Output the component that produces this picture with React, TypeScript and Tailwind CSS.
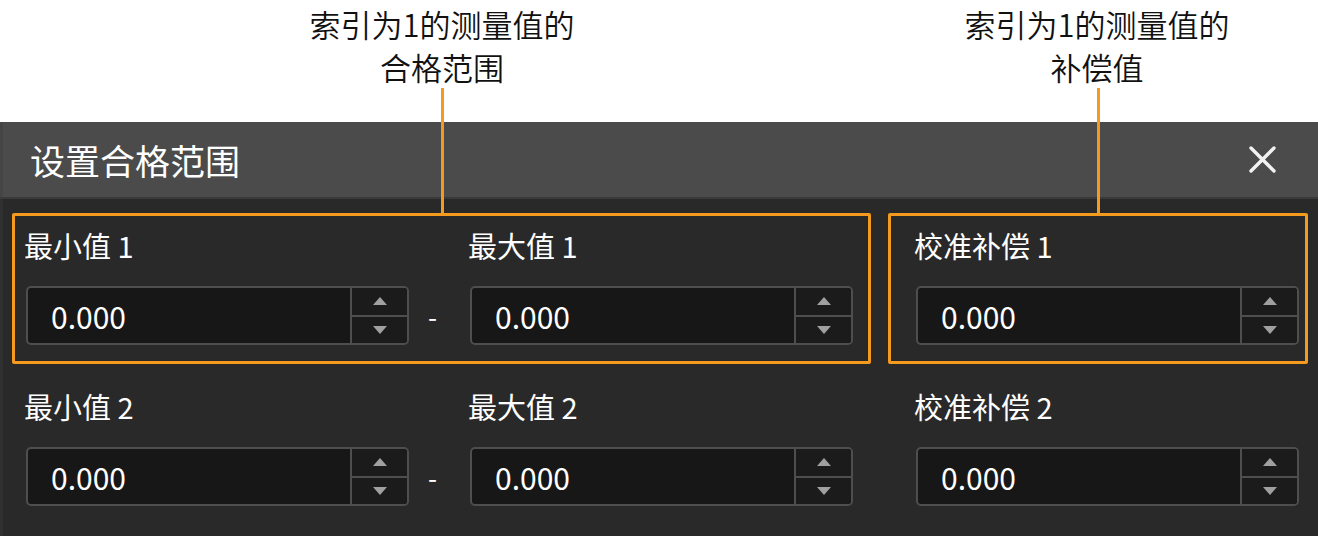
import React from "react";

const FONT = "font-['Noto_Sans_CJK_SC','Noto_Sans',sans-serif]";

function Spin({ value }: { value: string }) {
  return (
    <div className="flex h-[59px] w-[383px] rounded-[5px] border-2 border-[#4e4e4e] bg-[#171717] overflow-hidden">
      <div className="flex flex-1 items-center pl-[23px] text-[30px] leading-none text-white">{value}</div>
      <div className="flex w-[57px] flex-col border-l-2 border-[#4e4e4e]">
        <div className="flex flex-1 items-center justify-center border-b-2 border-[#4e4e4e] bg-[#1b1b1b]">
          <svg width="14" height="8" viewBox="0 0 14 8">
            <polygon points="7,0 14,8 0,8" fill="#a0a0a0" />
          </svg>
        </div>
        <div className="flex flex-1 items-center justify-center bg-[#1b1b1b]">
          <svg width="14" height="8" viewBox="0 0 14 8">
            <polygon points="0,0 14,0 7,8" fill="#a0a0a0" />
          </svg>
        </div>
      </div>
    </div>
  );
}

function Field({ label, value }: { label: string; value: string }) {
  return (
    <div className="flex flex-col gap-[27px]">
      <div className="-ml-[2px] h-[27px] text-[29px] leading-[27px] text-white">{label}</div>
      <Spin value={value} />
    </div>
  );
}

function Row({ n, last }: { n: number; last?: boolean }) {
  return (
    <div className={`flex items-end ${last ? "" : "mb-[48px]"}`}>
      <Field label={`最小值 ${n}`} value="0.000" />
      <div className="flex h-[59px] w-[61px] items-center justify-center pr-[14px] text-[26px] text-white">-</div>
      <Field label={`最大值 ${n}`} value="0.000" />
      <div className="w-[63px]" />
      <Field label={`校准补偿 ${n}`} value="0.000" />
    </div>
  );
}

export default function App() {
  return (
    <div className={`relative h-[536px] w-[1318px] overflow-hidden bg-white ${FONT}`}>
      <div className="relative h-[122px]">
        <div className="absolute left-[242px] top-[2px] w-[400px] text-center text-[31px] font-[350] leading-[43px] text-[#111]">
          索引为1的测量值的
          <br />
          合格范围
        </div>
        <div className="absolute left-[897px] top-[2px] w-[400px] text-center text-[31px] font-[350] leading-[43px] text-[#111]">
          索引为1的测量值的
          <br />
          补偿值
        </div>
      </div>
      <div className="flex h-[414px] flex-col">
        <div className="flex h-[75px] items-center justify-between border-l-[3px] border-[#454545] bg-[#4b4b4b] pl-[27px] pr-[42px]">
          <div className="text-[35px] leading-none text-white">设置合格范围</div>
          <svg width="27" height="27" viewBox="0 0 27 27">
            <path d="M2 2 L25 25 M25 2 L2 25" stroke="#f2f2f2" strokeWidth="3.4" strokeLinecap="round" />
          </svg>
        </div>
        <div className="h-[2px] bg-[#3a3a3a]" />
        <div className="flex-1 border-l-[3px] border-[#303030] bg-[#292929] pl-[23px] pt-[33px]">
          <Row n={1} />
          <Row n={2} last />
        </div>
      </div>
      {/* annotation boxes and leader lines */}
      <div className="pointer-events-none absolute left-[12px] top-[213px] h-[151px] w-[859px] rounded-[2px] border-[3px] border-[#f39a1f]" />
      <div className="pointer-events-none absolute left-[888px] top-[213px] h-[151px] w-[420px] rounded-[2px] border-[3px] border-[#f39a1f]" />
      <div className="pointer-events-none absolute left-[441px] top-[88px] h-[126px] w-[3px] bg-[#f39a1f]" />
      <div className="pointer-events-none absolute left-[1097px] top-[88px] h-[126px] w-[3px] bg-[#f39a1f]" />
    </div>
  );
}
